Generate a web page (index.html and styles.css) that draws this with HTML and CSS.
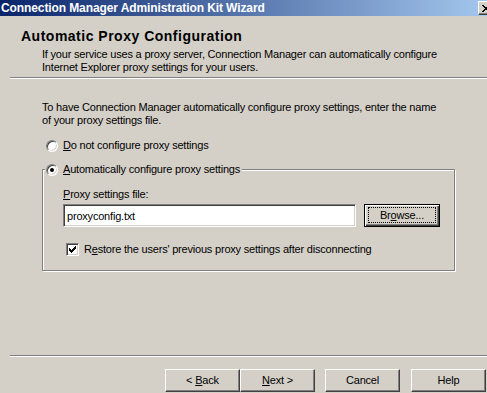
FILE: index.html
```html
<!DOCTYPE html>
<html lang="en">
<head>
    <meta charset="UTF-8">
    <title>Connection Manager Administration Kit Wizard</title>
    <link rel="stylesheet" href="styles.css">
</head>
<body>
    <div class="window">
        <div class="titlebar">
            <span class="title">Connection Manager Administration Kit Wizard</span>
            <span class="close-btn">
                <svg width="8" height="7" viewBox="0 0 8 7" shape-rendering="crispEdges"><path d="M0 0h2v1h-2zM6 0h2v1h-2zM1 1h2v1h-2zM5 1h2v1h-2zM2 2h4v1h-4zM3 3h2v1h-2zM2 4h4v1h-4zM1 5h2v1h-2zM5 5h2v1h-2zM0 6h2v1h-2zM6 6h2v1h-2z" fill="#000"/></svg>
            </span>
        </div>

        <div class="header">
            <h1>Automatic Proxy Configuration</h1>
            <p class="subtitle">If your service uses a proxy server, Connection Manager can automatically configure<br>Internet Explorer proxy settings for your users.</p>
        </div>
        <div class="sep"></div>

        <div class="content">
            <p class="intro">To have Connection Manager automatically configure proxy settings, enter the name<br>of your proxy settings file.</p>

            <label class="option first-option"><span class="radio"></span><span><u>D</u>o not configure proxy settings</span></label>

            <div class="group">
                <label class="option group-title"><span class="radio checked"></span><span><u>A</u>utomatically configure proxy settings</span></label>
                <div class="field-label"><u>P</u>roxy settings file:</div>
                <div class="file-row">
                    <input class="text-input" type="text" value="proxyconfig.txt">
                    <button class="btn default"><span class="focus">Br<u>o</u>wse...</span></button>
                </div>
                <label class="option check-row">
                    <span class="checkbox">
                        <svg width="7" height="7" viewBox="0 0 7 7" shape-rendering="crispEdges"><path d="M6 0h1v1h-1zM5 1h2v1h-2zM0 2h1v1h-1zM4 2h3v1h-3zM0 3h2v1h-2zM3 3h3v1h-3zM0 4h5v1h-5zM1 5h3v1h-3zM2 6h1v1h-1z" fill="#000"/></svg>
                    </span>
                    <span>R<u>e</u>store the users' previous proxy settings after disconnecting</span>
                </label>
            </div>
        </div>

        <div class="sep footer-sep"></div>
        <div class="buttons">
            <button class="btn">&lt; <u>B</u>ack</button>
            <button class="btn next"><u>N</u>ext &gt;</button>
            <button class="btn cancel">Cancel</button>
            <button class="btn">Help</button>
        </div>
    </div>
</body>
</html>
```

FILE: styles.css
```css
* {
    box-sizing: border-box;
    margin: 0;
    padding: 0;
}

body {
    width: 487px;
    height: 393px;
    overflow: hidden;
    background: #d4d0c8;
    color: #000;
    font-family: "Liberation Sans", Arial, sans-serif;
    font-size: 11px;
    line-height: 13px;
    letter-spacing: -0.2px;
}

/* the dialog is a bit wider than the capture */
.window {
    width: 496px;
    height: 393px;
}

/* Title bar */
.titlebar {
    height: 16px;
    display: flex;
    align-items: center;
    justify-content: space-between;
    padding: 0 2px 0 1px;
    background: linear-gradient(to right, #0a246a, #a6caf0);
    color: #fff;
}

.title {
    font-size: 12px;
    font-weight: bold;
    line-height: 16px;
    letter-spacing: -0.1px;
}

.close-btn {
    width: 16px;
    height: 14px;
    display: flex;
    align-items: center;
    justify-content: center;
    background: #d4d0c8;
    border: 1px solid;
    border-color: #fff #404040 #404040 #fff;
    box-shadow: inset -1px -1px 0 #808080;
}

/* Header */
.header h1 {
    font-size: 14px;
    line-height: 16px;
    font-weight: bold;
    letter-spacing: 0.5px;
    margin: 12px 0 0 21px;
}

.subtitle {
    margin: 4px 0 0 42px;
}

.sep {
    height: 2px;
    border-top: 1px solid #808080;
    border-bottom: 1px solid #fff;
    margin: 3px 0 0 10px;
}

/* Body */
.intro {
    margin: 22px 0 0 42px;
}

.option {
    display: flex;
    align-items: center;
    gap: 5px;
    height: 13px;
    line-height: 13px;
}

.first-option {
    margin: 12px 0 0 46px;
}

.radio {
    position: relative;
    flex-shrink: 0;
    width: 12px;
    height: 12px;
    border-radius: 50%;
    background: #fff;
    border: 1px solid;
    border-color: #808080 #fff #fff #808080;
    box-shadow: inset 1px 1px 0 #404040, inset -1px -1px 0 #d4d0c8;
}

.radio.checked::after {
    content: "";
    position: absolute;
    left: 3px;
    top: 3px;
    width: 4px;
    height: 4px;
    border-radius: 50%;
    background: #000;
}

/* Group box */
.group {
    width: 413px;
    margin: 17px 0 0 42px;
    padding: 0 0 14px 20px;
    border: 1px solid #808080;
    box-shadow: inset 1px 1px 0 #fff, 1px 1px 0 #fff;
}

.group-title {
    width: fit-content;
    margin: -7px 0 0 -18px;
    padding: 0 2px 0 1px;
    background: #d4d0c8;
}

.field-label {
    margin-top: 12px;
}

.file-row {
    display: flex;
    margin-top: 3px;
}

.text-input {
    width: 293px;
    height: 23px;
    margin-right: 8px;
    padding: 0 3px;
    background: #fff;
    border: 1px solid;
    border-color: #808080 #fff #fff #808080;
    box-shadow: inset 1px 1px 0 #404040, inset -1px -1px 0 #d4d0c8;
    font: inherit;
    letter-spacing: inherit;
    color: #000;
    outline: none;
}

.check-row {
    margin: 16px 0 0 3px;
}

.checkbox {
    flex-shrink: 0;
    width: 13px;
    height: 13px;
    display: flex;
    align-items: center;
    justify-content: center;
    background: #fff;
    border: 1px solid;
    border-color: #808080 #fff #fff #808080;
    box-shadow: inset 1px 1px 0 #404040, inset -1px -1px 0 #d4d0c8;
}

/* Buttons */
.btn {
    width: 75px;
    height: 23px;
    background: #d4d0c8;
    border: 1px solid;
    border-color: #fff #404040 #404040 #fff;
    box-shadow: inset -1px -1px 0 #808080;
    font: inherit;
    letter-spacing: inherit;
    color: #000;
}

.btn.default {
    width: 76px;
    padding: 2px 3px 3px;
    border: 1px solid #000;
    box-shadow: inset 1px 1px 0 #fff, inset -1px -1px 0 #404040, inset -2px -2px 0 #808080;
}

.focus {
    display: flex;
    align-items: center;
    justify-content: center;
    height: 100%;
    border: 1px dotted #000;
}

.footer-sep {
    margin-top: 84px;
}

.buttons {
    display: flex;
    margin-top: 12px;
    padding-left: 165px;
}

.next {
    margin-right: 10px;
}

.cancel {
    margin-right: 11px;
}
```
